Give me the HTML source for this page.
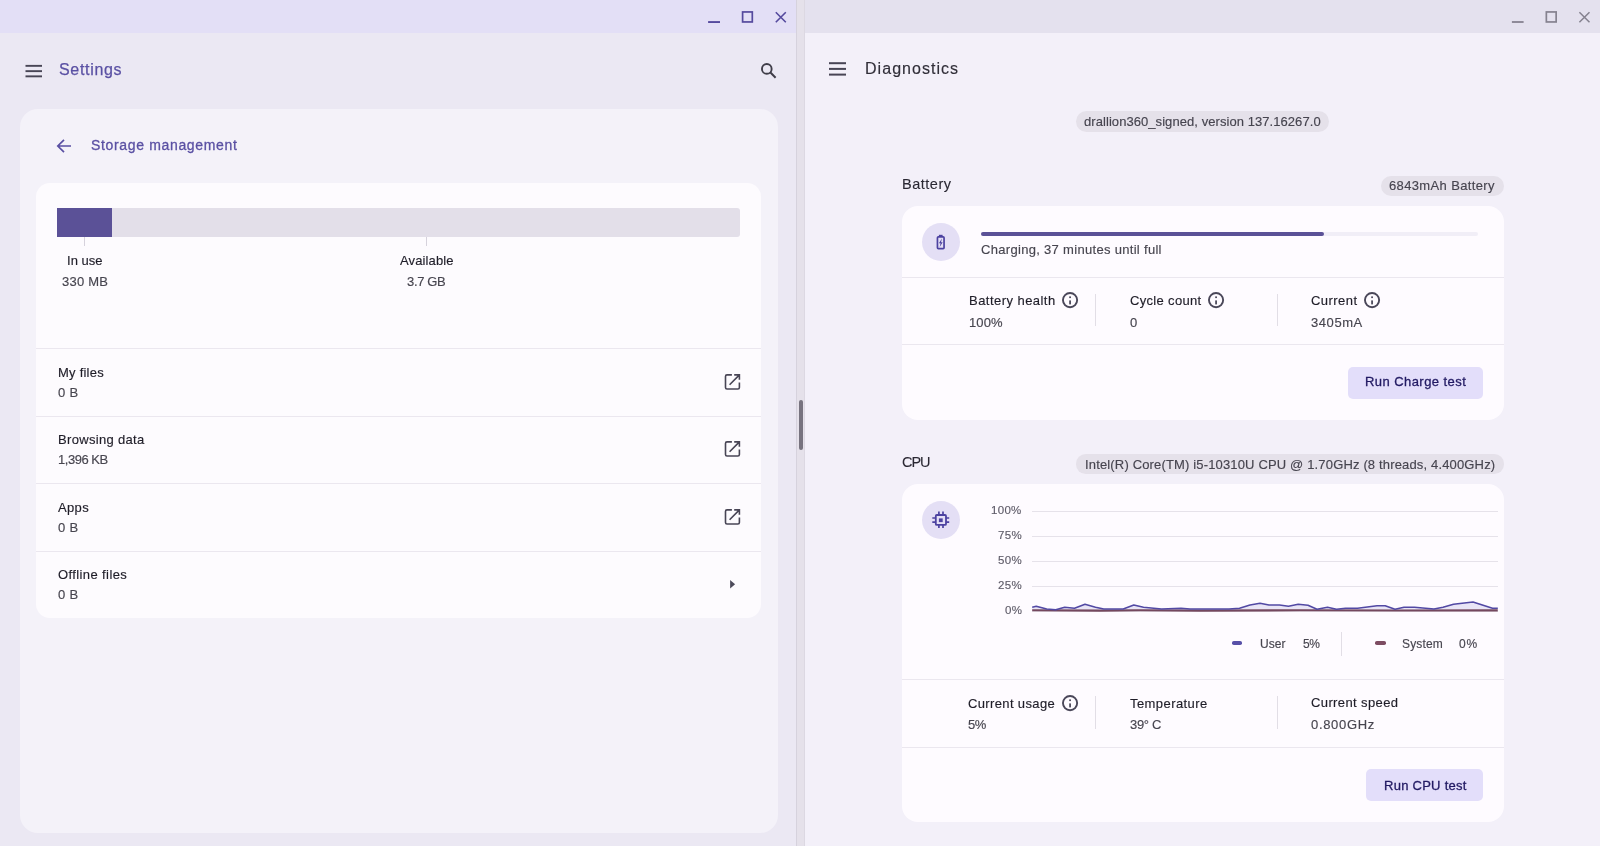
<!DOCTYPE html>
<html><head><meta charset="utf-8"><title>Settings / Diagnostics</title>
<style>
html,body{margin:0;padding:0;width:1600px;height:846px;overflow:hidden;background:#f3f0f9;}
body{position:relative;font-family:"Liberation Sans",sans-serif;}
.t{position:absolute;white-space:nowrap;will-change:transform;-webkit-text-stroke:0.15px currentColor;}
.r{position:absolute;}
</style></head><body>
<div class="r" style="left:0px;top:0px;width:796px;height:33px;background:#e3dff6;"></div>
<div class="r" style="left:0px;top:33px;width:796px;height:813px;background:#ebe8f3;"></div>
<svg class="r" style="left:0;top:0" width="800" height="32">
<rect x="708.1" y="21.1" width="11.9" height="1.9" fill="#554a9e"/>
<rect x="742.6" y="11.95" width="9.7" height="10" fill="none" stroke="#554a9e" stroke-width="1.7"/>
<path d="M775.8 12.2 L785.8 22.2 M785.8 12.2 L775.8 22.2" stroke="#554a9e" stroke-width="1.6" fill="none"/>
</svg>
<svg class="r" style="left:24px;top:60px" width="20" height="20" viewBox="0 0 20 20">
<rect x="1.5" y="4.9" width="16.5" height="1.9" fill="#484555"/>
<rect x="1.5" y="10.2" width="16.5" height="1.9" fill="#484555"/>
<rect x="1.5" y="15.4" width="16.5" height="1.9" fill="#484555"/>
</svg>
<div class="t" style="top:60.76px;font-size:16px;line-height:18px;color:#5a50a3;letter-spacing:0.685px;left:59.30px;-webkit-text-stroke:0.25px #5a50a3;">Settings</div>
<svg class="r" style="left:758px;top:61px" width="22" height="22" viewBox="0 0 22 22">
<circle cx="8.8" cy="7.9" r="4.85" fill="none" stroke="#3f3d48" stroke-width="1.9"/>
<path d="M12.2 11.3 L17.6 16.7" stroke="#3f3d48" stroke-width="2"/>
</svg>
<div class="r" style="left:20px;top:109px;width:758px;height:724px;background:#f4f2f9;border-radius:18px;"></div>
<svg class="r" style="left:54px;top:136px" width="20" height="20" viewBox="0 0 20 20">
<path d="M17 10 H4.2 M10 3.8 L3.8 10 L10 16.2" stroke="#5a50a3" stroke-width="1.7" fill="none"/>
</svg>
<div class="t" style="top:136.75px;font-size:14px;line-height:16px;color:#5a50a3;letter-spacing:0.66px;left:91.25px;-webkit-text-stroke:0.3px #5a50a3;">Storage management</div>
<div class="r" style="left:36px;top:183px;width:725px;height:435px;background:#fdfbfe;border-radius:14px;"></div>
<div class="r" style="left:57px;top:208px;width:683px;height:29px;background:#e3dfe9;border-radius:3px;"></div>
<div class="r" style="left:57px;top:208px;width:55px;height:29px;background:#5b5197;border-radius:3px 0 0 3pxpx;"></div>
<div class="r" style="left:84px;top:237px;width:1px;height:9px;background:#d6d2dc;"></div>
<div class="r" style="left:426px;top:237px;width:1px;height:9px;background:#d6d2dc;"></div>
<div class="t" style="top:252.90px;font-size:13px;line-height:15px;color:#1f1d28;letter-spacing:0.038px;left:66.90px;">In use</div>
<div class="t" style="top:273.75px;font-size:13px;line-height:15px;color:#47454f;letter-spacing:0.22px;left:61.90px;">330 MB</div>
<div class="t" style="top:252.75px;font-size:13px;line-height:15px;color:#1f1d28;letter-spacing:0.122px;left:399.50px;">Available</div>
<div class="t" style="top:273.50px;font-size:13px;line-height:15px;color:#47454f;letter-spacing:-0.344px;left:407.00px;">3.7 GB</div>
<div class="r" style="left:36px;top:348px;width:725px;height:1px;background:#ebe7ef;"></div>
<div class="r" style="left:36px;top:416px;width:725px;height:1px;background:#ebe7ef;"></div>
<div class="r" style="left:36px;top:483px;width:725px;height:1px;background:#ebe7ef;"></div>
<div class="r" style="left:36px;top:551px;width:725px;height:1px;background:#ebe7ef;"></div>
<div class="t" style="top:364.50px;font-size:13px;line-height:15px;color:#1f1d28;letter-spacing:0.235px;left:57.90px;">My files</div>
<div class="t" style="top:385.20px;font-size:13px;line-height:15px;color:#47454f;letter-spacing:0.293px;left:57.90px;">0 B</div>
<svg class="r" style="left:722px;top:371.0px" width="22" height="22" viewBox="0 0 22 22">
<path d="M9.9 3.9 H5 Q3.5 3.9 3.5 5.4 V16.5 Q3.5 18 5 18 H15.9 Q17.4 18 17.4 16.5 V11.4" stroke="#484555" stroke-width="1.6" fill="none"/>
<path d="M12.2 3.9 H17.4 V8.7 M17.4 3.9 L7.6 13.7" stroke="#484555" stroke-width="1.6" fill="none"/>
</svg>
<div class="t" style="top:431.75px;font-size:13px;line-height:15px;color:#1f1d28;letter-spacing:0.317px;left:57.90px;">Browsing data</div>
<div class="t" style="top:452.45px;font-size:13px;line-height:15px;color:#47454f;letter-spacing:-0.469px;left:57.90px;">1,396 KB</div>
<svg class="r" style="left:722px;top:438.2px" width="22" height="22" viewBox="0 0 22 22">
<path d="M9.9 3.9 H5 Q3.5 3.9 3.5 5.4 V16.5 Q3.5 18 5 18 H15.9 Q17.4 18 17.4 16.5 V11.4" stroke="#484555" stroke-width="1.6" fill="none"/>
<path d="M12.2 3.9 H17.4 V8.7 M17.4 3.9 L7.6 13.7" stroke="#484555" stroke-width="1.6" fill="none"/>
</svg>
<div class="t" style="top:499.60px;font-size:13px;line-height:15px;color:#1f1d28;letter-spacing:0.358px;left:57.90px;">Apps</div>
<div class="t" style="top:520.30px;font-size:13px;line-height:15px;color:#47454f;letter-spacing:0.293px;left:57.90px;">0 B</div>
<svg class="r" style="left:722px;top:506.1px" width="22" height="22" viewBox="0 0 22 22">
<path d="M9.9 3.9 H5 Q3.5 3.9 3.5 5.4 V16.5 Q3.5 18 5 18 H15.9 Q17.4 18 17.4 16.5 V11.4" stroke="#484555" stroke-width="1.6" fill="none"/>
<path d="M12.2 3.9 H17.4 V8.7 M17.4 3.9 L7.6 13.7" stroke="#484555" stroke-width="1.6" fill="none"/>
</svg>
<div class="t" style="top:566.60px;font-size:13px;line-height:15px;color:#1f1d28;letter-spacing:0.395px;left:57.90px;">Offline files</div>
<div class="t" style="top:587.30px;font-size:13px;line-height:15px;color:#47454f;letter-spacing:0.293px;left:57.90px;">0 B</div>
<svg class="r" style="left:722px;top:573.1px" width="22" height="22" viewBox="0 0 22 22">
<path d="M8.1 6.9 L13.1 11.2 L8.1 15.5 Z" fill="#4c4a5a"/>
</svg>
<div class="r" style="left:796px;top:0px;width:1px;height:846px;background:#d6d2dd;"></div>
<div class="r" style="left:797px;top:0px;width:7px;height:846px;background:#e5e1ea;"></div>
<div class="r" style="left:804px;top:0px;width:1px;height:846px;background:#dcd8e2;"></div>
<div class="r" style="left:799px;top:400px;width:4px;height:50px;background:#77737f;border-radius:2px;"></div>
<div class="r" style="left:805px;top:0px;width:795px;height:33px;background:#e4e1ee;"></div>
<div class="r" style="left:805px;top:33px;width:795px;height:813px;background:#f3f0f9;"></div>
<svg class="r" style="left:0;top:0" width="1600" height="32">
<rect x="1511.9" y="21.1" width="11.7" height="1.8" fill="#85828f"/>
<rect x="1546.35" y="11.95" width="9.8" height="10" fill="none" stroke="#85828f" stroke-width="1.7"/>
<path d="M1579.4 12.2 L1589.5 22.3 M1589.5 12.2 L1579.4 22.3" stroke="#85828f" stroke-width="1.5" fill="none"/>
</svg>
<svg class="r" style="left:828px;top:58px" width="20" height="20" viewBox="0 0 20 20">
<rect x="1" y="4.2" width="17" height="2" fill="#484555"/>
<rect x="1" y="9.9" width="17" height="2" fill="#484555"/>
<rect x="1" y="15.6" width="17" height="2" fill="#484555"/>
</svg>
<div class="t" style="top:59.96px;font-size:16px;line-height:18px;color:#302e38;letter-spacing:1.04px;left:865.20px;-webkit-text-stroke:0.15px #302e38;">Diagnostics</div>
<div class="r" style="left:1076px;top:111px;width:253px;height:21px;background:#e5e1ea;border-radius:10.5px;"></div>
<div class="t" style="top:113.60px;font-size:13px;line-height:15px;color:#46444f;letter-spacing:0.064px;left:1084.30px;">drallion360_signed, version 137.16267.0</div>
<div class="t" style="top:175.98px;font-size:14.5px;line-height:17px;color:#2a2833;letter-spacing:0.511px;left:902.40px;-webkit-text-stroke:0.1px #2a2833;">Battery</div>
<div class="r" style="left:1381px;top:175.5px;width:122.7px;height:20px;background:#e5e1ea;border-radius:10px;"></div>
<div class="t" style="top:177.80px;font-size:13px;line-height:15px;color:#46444f;letter-spacing:0.361px;left:1389.30px;">6843mAh Battery</div>
<div class="r" style="left:901.5px;top:206px;width:602px;height:214px;background:#fefbff;border-radius:16px;"></div>
<div class="r" style="left:922px;top:223px;width:38px;height:38px;border-radius:50%;background:#e4dff5"></div>
<svg class="r" style="left:931px;top:232px" width="20" height="20" viewBox="0 0 20 20">
<rect x="6.45" y="4.85" width="6.6" height="11.7" rx="0.9" fill="none" stroke="#4c42a0" stroke-width="1.7"/>
<rect x="7.9" y="2.8" width="3.7" height="2" fill="#4c42a0"/>
<path d="M10.9 6.6 L7.9 11.3 H9.6 L8.7 15 L11.7 10.2 H10 Z" fill="#4c42a0"/>
</svg>
<div class="r" style="left:980.5px;top:232px;width:497px;height:3.5px;background:#f1eef7;border-radius:2px;"></div>
<div class="r" style="left:980.5px;top:232px;width:343px;height:3.5px;background:#5b5197;border-radius:2px;"></div>
<div class="t" style="top:242.00px;font-size:13px;line-height:15px;color:#47454f;letter-spacing:0.308px;left:981.00px;">Charging, 37 minutes until full</div>
<div class="r" style="left:901.5px;top:277px;width:602px;height:1px;background:#ebe7ef;"></div>
<div class="r" style="left:901.5px;top:344px;width:602px;height:1px;background:#ebe7ef;"></div>
<div class="r" style="left:1095px;top:294px;width:1px;height:32px;background:#e2dee6;"></div>
<div class="r" style="left:1276.5px;top:294px;width:1px;height:32px;background:#e2dee6;"></div>
<div class="t" style="top:292.60px;font-size:13px;line-height:15px;color:#1f1d28;letter-spacing:0.457px;left:968.75px;">Battery health</div>
<svg class="r" style="left:1060.1px;top:290.0px" width="20" height="20" viewBox="0 0 20 20">
<circle cx="10.05" cy="10.1" r="7.1" fill="none" stroke="#4a4759" stroke-width="1.9"/>
<rect x="9.2" y="6.4" width="1.75" height="1.7" fill="#4a4759"/>
<rect x="9.2" y="10.4" width="1.75" height="4" fill="#4a4759"/>
</svg>
<div class="t" style="top:314.50px;font-size:13px;line-height:15px;color:#47454f;letter-spacing:0.132px;left:968.75px;">100%</div>
<div class="t" style="top:292.60px;font-size:13px;line-height:15px;color:#1f1d28;letter-spacing:0.328px;left:1129.60px;">Cycle count</div>
<svg class="r" style="left:1205.9px;top:290.2px" width="20" height="20" viewBox="0 0 20 20">
<circle cx="10.05" cy="10.1" r="7.1" fill="none" stroke="#4a4759" stroke-width="1.9"/>
<rect x="9.2" y="6.4" width="1.75" height="1.7" fill="#4a4759"/>
<rect x="9.2" y="10.4" width="1.75" height="4" fill="#4a4759"/>
</svg>
<div class="t" style="top:314.50px;font-size:13px;line-height:15px;color:#47454f;left:1129.60px;">0</div>
<div class="t" style="top:292.60px;font-size:13px;line-height:15px;color:#1f1d28;letter-spacing:0.441px;left:1310.90px;">Current</div>
<svg class="r" style="left:1361.8px;top:290.2px" width="20" height="20" viewBox="0 0 20 20">
<circle cx="10.05" cy="10.1" r="7.1" fill="none" stroke="#4a4759" stroke-width="1.9"/>
<rect x="9.2" y="6.4" width="1.75" height="1.7" fill="#4a4759"/>
<rect x="9.2" y="10.4" width="1.75" height="4" fill="#4a4759"/>
</svg>
<div class="t" style="top:314.50px;font-size:13px;line-height:15px;color:#47454f;letter-spacing:0.575px;left:1310.90px;">3405mA</div>
<div class="r" style="left:1348px;top:366.5px;width:135px;height:32px;background:#e3defa;border-radius:5px;"></div>
<div class="t" style="top:374.40px;font-size:13px;line-height:15px;color:#221a63;letter-spacing:0.438px;left:1364.80px;-webkit-text-stroke:0.3px #221a63;">Run Charge test</div>
<div class="t" style="top:454.18px;font-size:14.5px;line-height:17px;color:#2a2833;letter-spacing:-1.055px;left:902.00px;-webkit-text-stroke:0.1px #2a2833;">CPU</div>
<div class="r" style="left:1076px;top:454.2px;width:427.8px;height:19.5px;background:#e5e1ea;border-radius:9.75px;"></div>
<div class="t" style="top:456.60px;font-size:13px;line-height:15px;color:#46444f;letter-spacing:0.156px;left:1084.90px;">Intel(R) Core(TM) i5-10310U CPU @ 1.70GHz (8 threads, 4.400GHz)</div>
<div class="r" style="left:901.5px;top:484px;width:602px;height:338px;background:#fefbff;border-radius:16px;"></div>
<div class="r" style="left:922px;top:500.5px;width:38px;height:38px;border-radius:50%;background:#e4dff5"></div>
<svg class="r" style="left:931px;top:509.5px" width="20" height="20" viewBox="0 0 20 20">
<rect x="4.8" y="5.0" width="10.2" height="9.9" rx="1" fill="none" stroke="#4c42a0" stroke-width="1.8"/>
<rect x="7.9" y="8.4" width="3.8" height="3.7" fill="#4c42a0"/>
<path d="M7.9 1.6 V5 M12 1.6 V5 M7.9 14.9 V18.1 M12 14.9 V18.1 M1.3 8 H4.8 M1.3 12.1 H4.8 M15 8 H18.2 M15 12.1 H18.2" stroke="#4c42a0" stroke-width="1.7"/>
</svg>
<div class="r" style="left:1032px;top:511px;width:466px;height:1px;background:#e6e2ea;"></div>
<div class="t" style="top:504.42px;font-size:11.5px;line-height:13px;color:#5e5b68;letter-spacing:0.3px;right:578.20px;text-align:right;">100%</div>
<div class="r" style="left:1032px;top:536px;width:466px;height:1px;background:#e6e2ea;"></div>
<div class="t" style="top:529.22px;font-size:11.5px;line-height:13px;color:#5e5b68;letter-spacing:0.3px;right:578.20px;text-align:right;">75%</div>
<div class="r" style="left:1032px;top:561px;width:466px;height:1px;background:#e6e2ea;"></div>
<div class="t" style="top:554.02px;font-size:11.5px;line-height:13px;color:#5e5b68;letter-spacing:0.3px;right:578.20px;text-align:right;">50%</div>
<div class="r" style="left:1032px;top:586px;width:466px;height:1px;background:#e6e2ea;"></div>
<div class="t" style="top:579.12px;font-size:11.5px;line-height:13px;color:#5e5b68;letter-spacing:0.3px;right:578.20px;text-align:right;">25%</div>
<div class="r" style="left:1032px;top:611px;width:466px;height:1px;background:#e6e2ea;"></div>
<div class="t" style="top:603.72px;font-size:11.5px;line-height:13px;color:#5e5b68;letter-spacing:0.3px;right:578.20px;text-align:right;">0%</div>
<svg class="r" style="left:0;top:0" width="1600" height="846">
<polygon points="1032.2,607.2 1036.2,606.2 1046.7,609.0 1055.7,609.8 1064.7,607.2 1074.5,608.3 1085.0,604.2 1095.5,607.2 1103.8,609.0 1123.2,609.0 1133.8,605.0 1143.5,607.2 1161.5,609.0 1181.0,608.3 1190.0,609.0 1229.0,609.0 1239.5,608.3 1250.0,605.0 1260.0,603.2 1269.0,605.0 1279.5,605.0 1288.5,606.2 1298.2,604.2 1308.0,605.3 1317.0,609.2 1327.5,607.2 1336.5,609.2 1345.5,608.3 1357.5,608.3 1377.0,605.8 1385.2,605.8 1395.0,609.2 1404.0,607.2 1414.5,607.2 1434.0,609.0 1443.0,607.2 1453.5,604.2 1473.0,602.0 1492.5,608.3 1497.8,608.3 1497.75,611 1032.2,611" fill="#e9e5f6"/>
<polyline points="1032.2,610.3 1100,610.6 1140,610.2 1200,610.6 1300,610.3 1400,610.5 1497.75,610.4" fill="none" stroke="#74485e" stroke-width="2.1"/>
<polyline points="1032.2,607.2 1036.2,606.2 1046.7,609.0 1055.7,609.8 1064.7,607.2 1074.5,608.3 1085.0,604.2 1095.5,607.2 1103.8,609.0 1123.2,609.0 1133.8,605.0 1143.5,607.2 1161.5,609.0 1181.0,608.3 1190.0,609.0 1229.0,609.0 1239.5,608.3 1250.0,605.0 1260.0,603.2 1269.0,605.0 1279.5,605.0 1288.5,606.2 1298.2,604.2 1308.0,605.3 1317.0,609.2 1327.5,607.2 1336.5,609.2 1345.5,608.3 1357.5,608.3 1377.0,605.8 1385.2,605.8 1395.0,609.2 1404.0,607.2 1414.5,607.2 1434.0,609.0 1443.0,607.2 1453.5,604.2 1473.0,602.0 1492.5,608.3 1497.8,608.3" fill="none" stroke="#5249a4" stroke-width="1.6" stroke-linejoin="round"/>
</svg>
<div class="r" style="left:1232.3px;top:641px;width:10px;height:3.6px;background:#5850a8;border-radius:1.8px;"></div>
<div class="t" style="top:637.04px;font-size:12px;line-height:14px;color:#47454f;letter-spacing:0.056px;left:1259.60px;">User</div>
<div class="t" style="top:637.04px;font-size:12px;line-height:14px;color:#47454f;letter-spacing:-0.44px;left:1302.70px;">5%</div>
<div class="r" style="left:1341px;top:632px;width:1px;height:24px;background:#e2dee6;"></div>
<div class="r" style="left:1374.8px;top:641px;width:11px;height:3.6px;background:#7d4c62;border-radius:1.8px;"></div>
<div class="t" style="top:637.04px;font-size:12px;line-height:14px;color:#47454f;letter-spacing:0.138px;left:1402.40px;">System</div>
<div class="t" style="top:637.04px;font-size:12px;line-height:14px;color:#47454f;letter-spacing:0.86px;left:1459.00px;">0%</div>
<div class="r" style="left:901.5px;top:679px;width:602px;height:1px;background:#ebe7ef;"></div>
<div class="r" style="left:901.5px;top:747px;width:602px;height:1px;background:#ebe7ef;"></div>
<div class="r" style="left:1095px;top:696px;width:1px;height:33px;background:#e2dee6;"></div>
<div class="r" style="left:1276.5px;top:696px;width:1px;height:33px;background:#e2dee6;"></div>
<div class="t" style="top:695.50px;font-size:13px;line-height:15px;color:#1f1d28;letter-spacing:0.36px;left:968.40px;">Current usage</div>
<svg class="r" style="left:1060.3px;top:692.6px" width="20" height="20" viewBox="0 0 20 20">
<circle cx="10.05" cy="10.1" r="7.1" fill="none" stroke="#4a4759" stroke-width="1.9"/>
<rect x="9.2" y="6.4" width="1.75" height="1.7" fill="#4a4759"/>
<rect x="9.2" y="10.4" width="1.75" height="4" fill="#4a4759"/>
</svg>
<div class="t" style="top:717.00px;font-size:13px;line-height:15px;color:#47454f;letter-spacing:-0.385px;left:968.40px;">5%</div>
<div class="t" style="top:695.50px;font-size:13px;line-height:15px;color:#1f1d28;letter-spacing:0.422px;left:1129.80px;">Temperature</div>
<div class="t" style="top:717.00px;font-size:13px;line-height:15px;color:#47454f;letter-spacing:-0.314px;left:1129.80px;">39° C</div>
<div class="t" style="top:695.20px;font-size:13px;line-height:15px;color:#1f1d28;letter-spacing:0.385px;left:1311.00px;">Current speed</div>
<div class="t" style="top:716.50px;font-size:13px;line-height:15px;color:#47454f;letter-spacing:0.675px;left:1311.00px;">0.800GHz</div>
<div class="r" style="left:1366px;top:768.75px;width:117px;height:32.5px;background:#e3defa;border-radius:5px;"></div>
<div class="t" style="top:778.00px;font-size:13px;line-height:15px;color:#221a63;letter-spacing:0.266px;left:1383.60px;-webkit-text-stroke:0.3px #221a63;">Run CPU test</div>
</body></html>
